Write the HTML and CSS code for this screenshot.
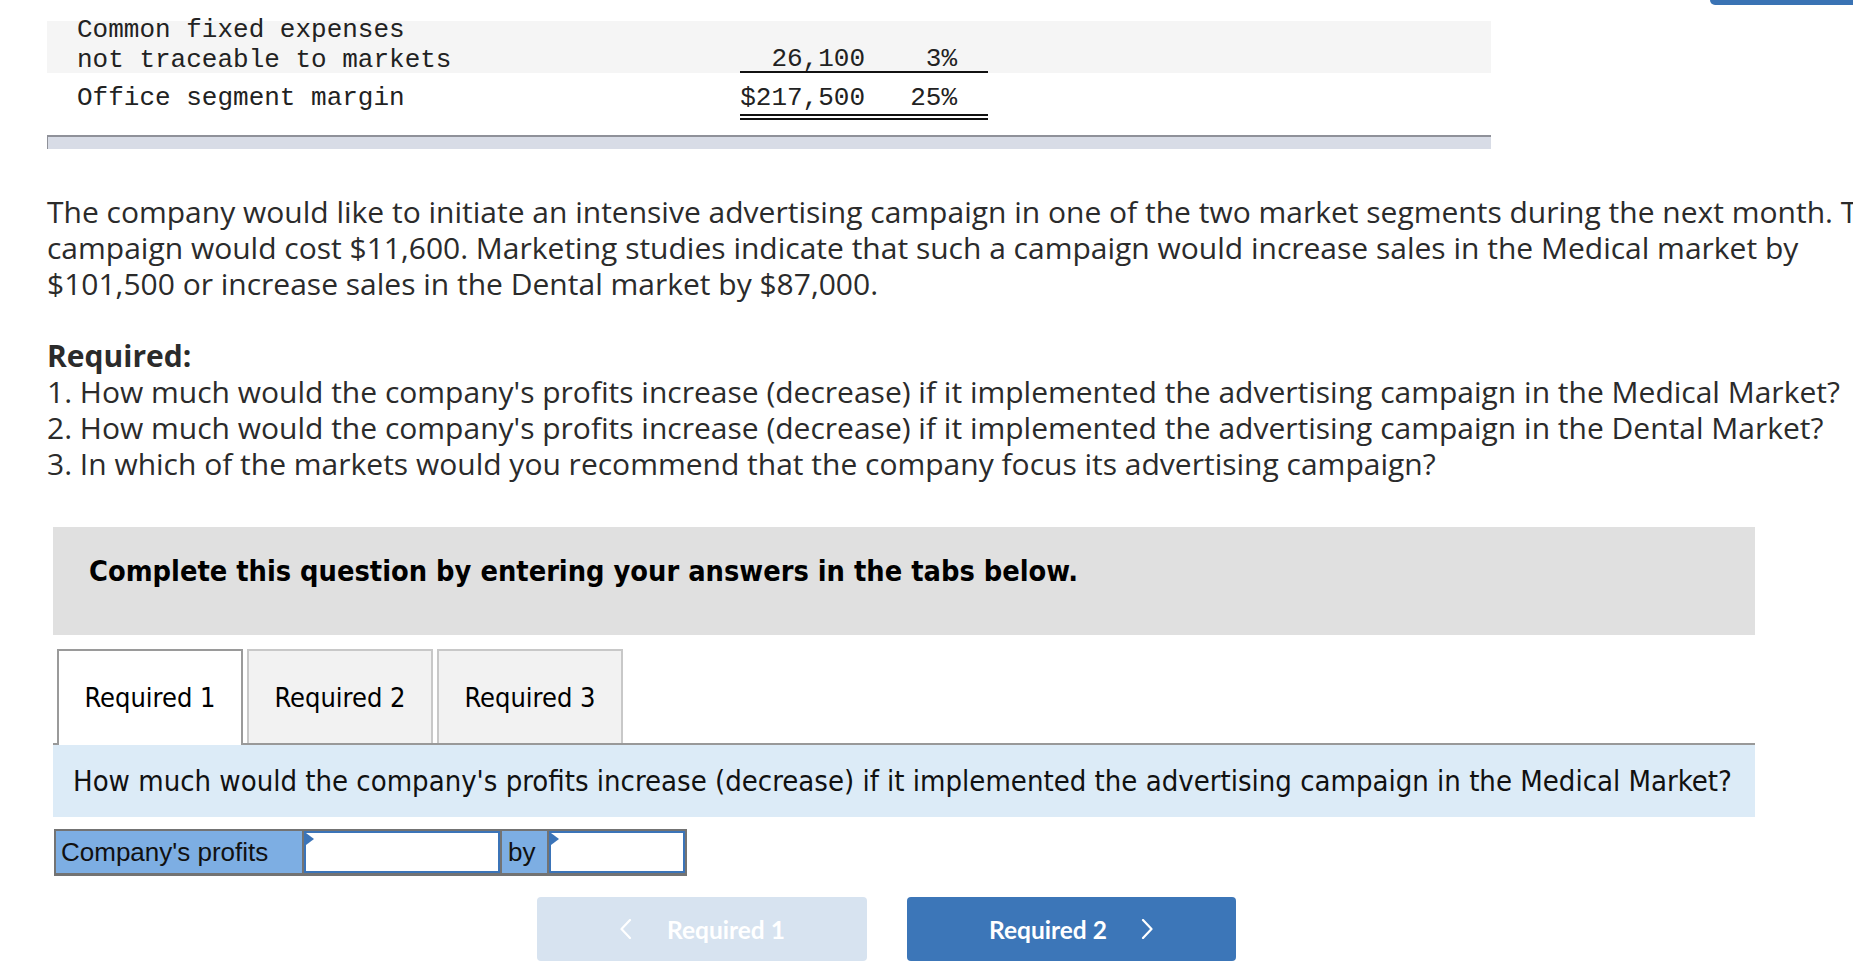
FILE: index.html
```html
<!DOCTYPE html>
<html lang="en">
<head>
<meta charset="utf-8">
<title>Advertising campaign – segment margin</title>
<link rel="stylesheet" href="styles.css">
</head>
<body>
<div class="topbar"><div class="top-btn"></div></div>

<div class="fin">
  <div class="fin-row shaded">
    <div class="fin-label"><span>Common fixed expenses<br>not traceable to markets</span></div>
    <div class="fin-amt single"><span>26,100</span></div>
    <div class="fin-pct single"><span>3%</span></div>
    <div class="fin-fill"></div>
  </div>
  <div class="fin-row plain">
    <div class="fin-label">Office segment margin</div>
    <div class="fin-amt double">$217,500</div>
    <div class="fin-pct double">25%</div>
    <div class="fin-fill"></div>
  </div>
</div>
<div class="fin-foot"></div>

<div class="intro">
  <p class="lead">The company would like to initiate an intensive advertising campaign in one of the two market segments during the next month. The<br>campaign would cost $11,600. Marketing studies indicate that such a campaign would increase sales in the Medical market by<br>$101,500 or increase sales in the Dental market by $87,000.</p>
  <p class="req-title">Required:</p>
  <p class="req-item">1. How much would the company's profits increase (decrease) if it implemented the advertising campaign in the Medical Market?</p>
  <p class="req-item">2. How much would the company's profits increase (decrease) if it implemented the advertising campaign in the Dental Market?</p>
  <p class="req-item">3. In which of the markets would you recommend that the company focus its advertising campaign?</p>
</div>

<section class="task">
  <div class="task-head">Complete this question by entering your answers in the tabs below.</div>
  <div class="tabs">
    <div class="tab active">Required 1</div>
    <div class="tab">Required 2</div>
    <div class="tab">Required 3</div>
  </div>
  <div class="prompt">How much would the company's profits increase (decrease) if it implemented the advertising campaign in the Medical Market?</div>
  <div class="answer">
    <div class="cell label">Company's profits</div>
    <div class="cell field wide"><input type="text" aria-label="increase or decrease"></div>
    <div class="cell label by">by</div>
    <div class="cell field narrow"><input type="text" aria-label="amount"></div>
  </div>
  <div class="nav">
    <div class="btn prev">
      <svg class="chev" width="13" height="20" viewBox="0 0 13 20"><polyline points="11,1 2.5,10 11,19"/></svg>
      <span>Required 1</span>
    </div>
    <div class="btn next">
      <span>Required 2</span>
      <svg class="chev" width="13" height="20" viewBox="0 0 13 20"><polyline points="2,1 10.5,10 2,19"/></svg>
    </div>
  </div>
</section>
</body>
</html>
```
FILE: styles.css
```css
html, body {
  margin: 0;
  padding: 0;
  background: #ffffff;
  overflow: hidden;
}
body {
  width: 1853px;
  height: 974px;
}

/* top-right clipped button */
.topbar {
  display: flex;
  justify-content: flex-end;
  height: 5px;
}
.top-btn {
  width: 143px;
  height: 5px;
  background: #3a73b4;
  border-bottom-left-radius: 6px;
}

/* financial table */
.fin {
  margin: 16px 0 0 47px;
  width: 1444px;
  font-family: "Liberation Mono", "Courier New", monospace;
  font-size: 26px;
  color: #222222;
}
.fin-row {
  display: grid;
  grid-template-columns: 693px 125px 123px 1fr;
}
.fin-row.shaded {
  background: #f5f5f5;
  height: 52px;
}
.shaded .fin-label {
  height: 52px;
  padding-left: 30px;
  line-height: 29.5px;
  display: flex;
  align-items: flex-end;
}
.shaded .fin-label span {
  margin-bottom: -2px;
}
.shaded .fin-amt,
.shaded .fin-pct {
  height: 52px;
  box-sizing: border-box;
  line-height: 24px;
  display: flex;
  align-items: flex-end;
  justify-content: flex-end;
}
.single {
  border-bottom: 2px solid #111111;
}
.fin-pct {
  padding-right: 31px;
}
.plain .fin-label,
.plain .fin-amt,
.plain .fin-pct {
  padding-top: 11px;
  line-height: 28px;
}
.plain .fin-label {
  padding-left: 30px;
}
.plain .fin-amt,
.plain .fin-pct {
  text-align: right;
  padding-bottom: 2px;
}
.double {
  border-bottom: 6px double #111111;
}
.fin-foot {
  margin: 15px 0 0 47px;
  width: 1443px;
  height: 12px;
  background: #d8dce6;
  border-top: 2px solid #8f9199;
  border-left: 1px solid #8f9199;
}

/* intro text */
.intro {
  margin: 45px 0 0 47px;
  font-family: "Open Sans", Lato, sans-serif;
  font-size: 30px;
  line-height: 36px;
  color: #2b2b2b;
  white-space: nowrap;
}
.intro p {
  margin: 0;
}
.intro .lead {
  margin-bottom: 36px;
}
.req-title {
  font-weight: 700;
}

/* task area */
.task {
  margin: 45px 0 0 53px;
  width: 1702px;
  font-family: "DejaVu Sans Condensed", "DejaVu Sans", sans-serif;
  font-stretch: condensed;
  color: #000000;
}
.task-head {
  box-sizing: border-box;
  height: 108px;
  padding: 28px 36px 0;
  background: #e0e0e0;
  font-size: 28.7px;
  font-weight: 700;
  line-height: 32px;
}
.tabs {
  margin-top: 14px;
  display: flex;
  gap: 4px;
  padding-left: 4px;
  border-bottom: 2px solid #999999;
  height: 94px;
}
.tab {
  box-sizing: border-box;
  width: 186px;
  height: 94px;
  border: 2px solid #c8c8c8;
  border-bottom: none;
  background: #f2f2f2;
  display: flex;
  align-items: center;
  justify-content: center;
  font-size: 27px;
}
.tab.active {
  height: 96px;
  border-color: #9a9a9a;
  background: #ffffff;
  position: relative;
  z-index: 1;
  padding-bottom: 2px;
}
.prompt {
  box-sizing: border-box;
  height: 72px;
  padding-left: 20px;
  background: #dcebf7;
  display: flex;
  align-items: center;
  font-size: 29px;
  color: #111111;
}

/* answer row */
.answer {
  margin: 12px 0 0 1px;
  display: inline-flex;
  gap: 2px;
  padding: 2px 2px 3px;
  background: #737373;
  height: 42px;
}
.cell {
  box-sizing: border-box;
  height: 42px;
}
.cell.label {
  width: 246px;
  padding-left: 5px;
  background: #7daee3;
  font-family: "Liberation Sans", Arial, sans-serif;
  font-stretch: normal;
  font-size: 26px;
  color: #111111;
  display: flex;
  align-items: center;
}
.cell.label.by {
  width: 45px;
  padding-left: 6px;
}
.cell.field {
  position: relative;
  background: #ffffff;
  border: 2px solid #3b74b8;
}
.cell.field::before {
  content: "";
  position: absolute;
  left: 0;
  top: 0;
  border-left: 8px solid #3b74b8;
  border-top: 6px solid transparent;
  border-bottom: 6px solid transparent;
}
.cell.field input {
  box-sizing: border-box;
  width: 100%;
  height: 100%;
  border: none;
  outline: none;
  background: transparent;
  padding: 0 6px;
  font-size: 22px;
}
.cell.wide {
  width: 196px;
}
.cell.narrow {
  width: 136px;
}

/* nav buttons */
.nav {
  display: flex;
  gap: 40px;
  margin: 21px 0 0 484px;
}
.btn {
  box-sizing: border-box;
  height: 64px;
  border-radius: 4px;
  display: flex;
  align-items: center;
  justify-content: center;
  font-family: Lato, "Open Sans", sans-serif;
  font-weight: 700;
  font-size: 24.5px;
  color: #ffffff;
}
.btn.prev {
  width: 330px;
  gap: 35px;
  background: #d7e3f0;
}
.btn.next {
  width: 329px;
  gap: 34px;
  background: #3c76b8;
}
.chev polyline {
  fill: none;
  stroke: #ffffff;
  stroke-width: 2.2;
  stroke-linecap: round;
  stroke-linejoin: round;
}
```
